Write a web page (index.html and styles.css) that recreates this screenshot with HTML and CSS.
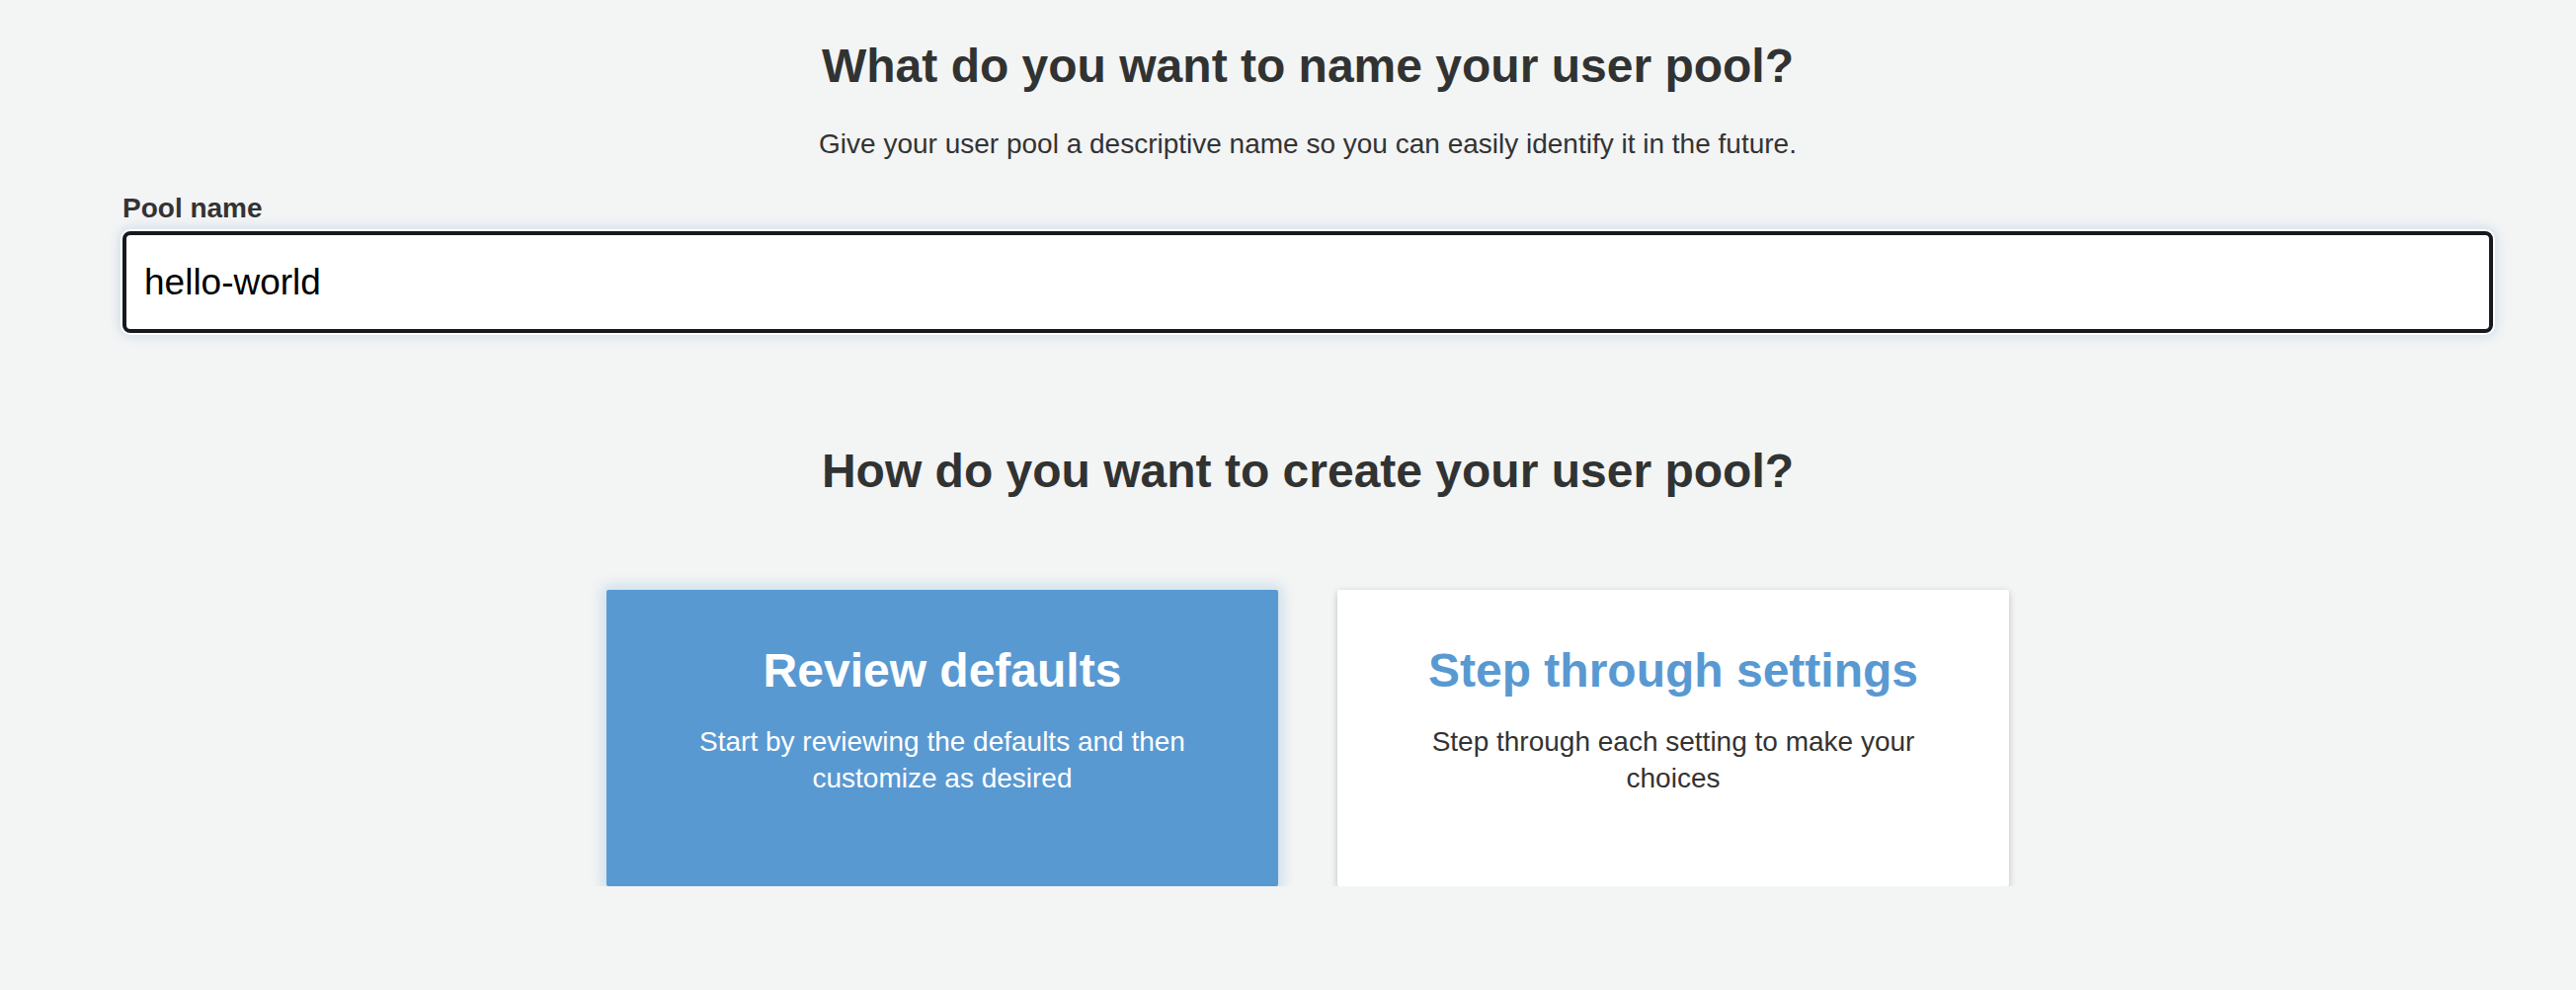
FILE: index.html
```html
<!DOCTYPE html>
<html lang="en">

<head>
    <meta charset="UTF-8">
    <meta name="viewport" content="width=device-width, initial-scale=1.0">
    <title>Create a user pool</title>
    <link rel="stylesheet" href="styles.css">
</head>

<body>
    <div class="page">
        <h1 class="heading">What do you want to name your user pool?</h1>
        <p class="subtitle">Give your user pool a descriptive name so you can easily identify it in the future.</p>

        <label class="field-label" for="pool-name">Pool name</label>
        <input class="field-input" id="pool-name" type="text" value="hello-world">

        <h2 class="heading heading-second">How do you want to create your user pool?</h2>

        <div class="choices">
            <div class="choice selected">
                <h3 class="choice-title">Review defaults</h3>
                <p class="choice-text">Start by reviewing the defaults and then customize as desired</p>
            </div>
            <div class="choice">
                <h3 class="choice-title">Step through settings</h3>
                <p class="choice-text">Step through each setting to make your choices</p>
            </div>
        </div>
    </div>
</body>

</html>
```

FILE: styles.css
```css
body {
    margin: 0;
    background-color: #f3f4f4;
    font-family: "Liberation Sans", Arial, sans-serif;
    color: #333;
}

.page {
    width: 2400px;
    margin-left: 124px;
    padding-top: 39px;
}

.heading {
    margin: 0;
    font-size: 48px;
    line-height: 56px;
    font-weight: bold;
    text-align: center;
    color: #313332;
}

.subtitle {
    margin: 33px 0 0;
    font-size: 28px;
    line-height: 36px;
    text-align: center;
}

.field-label {
    display: block;
    margin-top: 29px;
    font-size: 28px;
    line-height: 36px;
    font-weight: bold;
}

.field-input {
    display: block;
    box-sizing: border-box;
    width: 2400px;
    height: 103px;
    margin-top: 5px;
    padding: 0 18px;
    border: 4px solid #16191f;
    border-radius: 8px;
    background-color: #fff;
    font-family: "Liberation Sans", Arial, sans-serif;
    font-size: 37px;
    color: #000;
    outline: none;
    box-shadow: 0 0 0 2px #fff, 0 0 12px 3px rgba(0, 115, 187, 0.18);
}

.heading-second {
    margin-top: 112px;
}

.choices {
    display: flex;
    justify-content: center;
    gap: 60px;
    margin-top: 92px;
}

.choice {
    box-sizing: border-box;
    width: 680px;
    height: 300px;
    padding: 56px 40px 0;
    background-color: #fff;
    border-radius: 2px;
    text-align: center;
    box-shadow: 0 2px 7px rgba(0, 0, 0, 0.22);
}

.choice-title {
    margin: 0;
    font-size: 48px;
    line-height: 52px;
    font-weight: bold;
    color: #5999d2;
}

.choice-text {
    margin: 27px 0 0;
    padding: 0 40px;
    font-size: 28px;
    line-height: 37px;
}

.choice.selected {
    background-color: #5999d2;
    box-shadow: 0 0 14px 4px rgba(0, 115, 187, 0.18);
}

.choice.selected .choice-title,
.choice.selected .choice-text {
    color: #fff;
}
```
